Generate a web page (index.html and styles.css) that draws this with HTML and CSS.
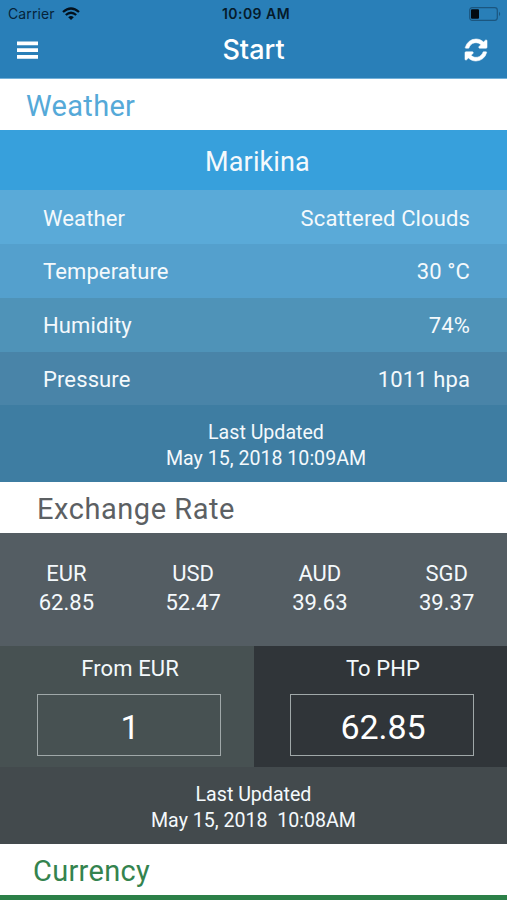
FILE: index.html
```html
<!DOCTYPE html>
<html lang="en">
<head>
<meta charset="utf-8">
<title>Start</title>
<link rel="stylesheet" href="styles.css">
</head>
<body>
<header class="topbar">
  <div class="status">
    <div class="carrier"><span>Carrier</span>
      <svg class="wifi" viewBox="0 0 18 13"><path d="M1 5Q9-2 17 5M3.8 8Q9 3.500 14.200 8" fill="none" stroke="currentColor" stroke-width="2.3"/><path d="M6.200 10.200Q9 8 11.800 10.200L9 13Z" fill="currentColor"/></svg>
    </div>
    <div class="clock">10:09 AM</div>
    <svg class="battery" viewBox="0 0 32 14"><rect x=".7" y=".7" width="27.6" height="12.6" rx="2.5" fill="none" stroke="#1b567f" stroke-width="1.2"/><rect x="2" y="2.3" width="8" height="9.4" rx="1" fill="#020a10"/><path d="M30 4.8q2.4 2.2 0 4.4z" fill="#1b567f"/></svg>
  </div>
  <div class="nav">
    <svg class="menu" viewBox="0 0 22 19"><path d="M0 2h22M0 9.1h22M0 16.2h22" stroke="#fff" stroke-width="4"/></svg>
    <h1>Start</h1>
    <svg class="refresh" viewBox="0 0 1536 1536"><path fill="#fff" stroke="#fff" stroke-width="40" d="M1511 928q0 5-1 7-64 268-268 434.500t-478 166.500q-146 0-282.500-55t-243.500-157l-129 129q-19 19-45 19t-45-19-19-45v-448q0-26 19-45t45-19h448q26 0 45 19t19 45-19 45l-137 137q71 66 161 102t187 36q134 0 250-65t186-179q11-17 53-117 8-23 30-23h192q13 0 22.500 9.500t9.500 22.500zm25-800v448q0 26-19 45t-45 19h-448q-26 0-45-19t-19-45 19-45l138-138q-148-137-349-137-134 0-250 65t-186 179q-11 17-53 117-8 23-30 23h-199q-13 0-22.500-9.500t-9.500-22.500v-7q65-268 270-434.500t480-166.500q146 0 284 55.500t245 156.500l130-129q19-19 45-19t45 19 19 45z"/></svg>
  </div>
</header>
<main>
  <h2 class="heading weather-heading">Weather</h2>
  <section class="weather">
    <div class="city">Marikina</div>
    <div class="row r1"><span>Weather</span><span>Scattered Clouds</span></div>
    <div class="row r2"><span>Temperature</span><span>30 °C</span></div>
    <div class="row r3"><span>Humidity</span><span>74%</span></div>
    <div class="row r4"><span>Pressure</span><span>1011 hpa</span></div>
    <div class="updated weather-updated">Last Updated<br>May 15, 2018 10:09AM</div>
  </section>
  <h2 class="heading rate-heading">Exchange Rate</h2>
  <section class="exchange">
    <div class="rates">
      <div>EUR<br>62.85</div><div>USD<br>52.47</div><div>AUD<br>39.63</div><div>SGD<br>39.37</div>
    </div>
    <div class="converter">
      <div class="side from"><div class="label">From EUR</div><div class="amount">1</div></div>
      <div class="side to"><div class="label">To PHP</div><div class="amount">62.85</div></div>
    </div>
    <div class="updated rate-updated">Last Updated<br>May 15, 2018&nbsp; 10:08AM</div>
  </section>
  <h2 class="heading currency-heading">Currency</h2>
  <div class="currency"></div>
</main>
</body>
</html>
```
FILE: styles.css
```css
* { box-sizing: border-box; }
body {
  margin: 0;
  height: 900px;
  overflow: hidden;
  background: #fff;
  font-family: Roboto, sans-serif;
  font-size: 22px;
  letter-spacing: .12px;
  color: #f4f9fc;
}
h1, h2 { margin: 0; font-weight: 400; }
svg { display: block; }
.topbar { height: 79px; background: #297fb8; border-bottom: 1px solid #72b0d9; }
.status {
  display: grid;
  grid-template-columns: 1fr auto 1fr;
  align-items: center;
  height: 27px;
  padding: 0 6px 0 8px;
  font: 14px/27px Inter, sans-serif;
  letter-spacing: 0;
  color: #06243a;
}
.carrier { display: flex; align-items: center; gap: 7px; letter-spacing: .1px; }
.wifi { width: 18px; height: 13px; color: #03111c; }
.clock { font-weight: 600; letter-spacing: .45px; padding-left: 3px; color: #051b2b; }
.battery { width: 32px; height: 14px; justify-self: end; }
.nav {
  display: grid;
  grid-template-columns: 1fr auto 1fr;
  align-items: center;
  height: 46px;
  padding: 0 20px 0 17px;
}
.nav h1 { font: 500 27px/46px Inter, sans-serif; letter-spacing: 0; padding-left: 3px; color: #fff; }
.menu { width: 21px; height: 19px; }
.refresh { width: 22px; height: 22px; justify-self: end; overflow: visible; }
.heading { height: 51px; font-size: 29px; line-height: 55px; letter-spacing: .55px; }
.weather-heading { padding-left: 26px; letter-spacing: .3px; color: #55a9d8; }
.rate-heading { padding-left: 37px; line-height: 54px; color: #5c6063; }
.currency-heading { padding-left: 33px; letter-spacing: .3px; color: #34834e; }
.city { height: 60px; background: #37a0dc; text-align: center; font-size: 27px; line-height: 64px; padding-left: 8px; }
.row {
  display: flex;
  justify-content: space-between;
  height: 54px;
  line-height: 55px;
  padding: 0 37px 0 43px;
}
.r1 { background: #5aaad8; line-height: 57px; }
.r2 { background: #54a0cd; line-height: 56px; }
.r3 { background: #4f93b8; }
.r4 { background: #4984a8; height: 53px; }
.updated { text-align: center; font-size: 19.6px; line-height: 26px; letter-spacing: 0; }
.weather-updated { height: 77px; padding: 15px 0 0 25px; background: #3e7da2; }
.rates {
  display: grid;
  grid-template-columns: repeat(4, 1fr);
  height: 113px;
  padding-top: 26px;
  background: #545d63;
  text-align: center;
  line-height: 29px;
  letter-spacing: 0;
}
.rates div { padding-left: 6px; }
.converter { display: grid; grid-template-columns: 254px 1fr; height: 121px; text-align: center; }
.side { display: flex; flex-direction: column; padding: 0 33px 0 37px; }
.from { background: #475152; }
.to { background: #303539; padding-left: 36px; }
.label { height: 48px; line-height: 45px; padding-left: 2px; }
.amount { height: 62px; padding-left: 2px; border: 1px solid #a0a8a9; color: #fff; font-size: 34px; line-height: 65px; letter-spacing: -.1px; }
.rate-updated { height: 77px; padding-top: 15px; background: #434a4d; }
.currency { height: 5px; background: #2c8048; }
```
